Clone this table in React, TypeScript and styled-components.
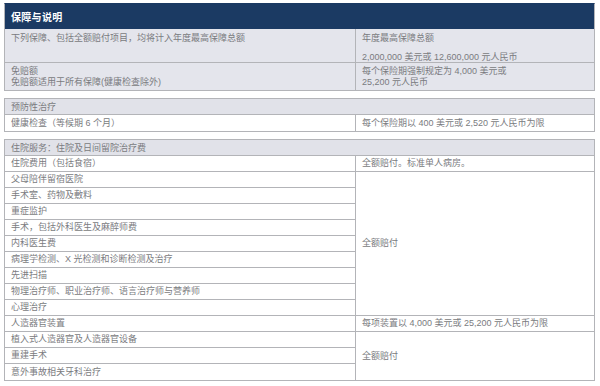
import React from "react";
import styled, { createGlobalStyle } from "styled-components";

const Global = createGlobalStyle`
  html, body { margin: 0; padding: 0; background: #ffffff; }
  body { font-family: "Liberation Sans", "Noto Sans CJK SC", sans-serif; }
`;

const Page = styled.div`
  width: 600px;
  height: 386px;
  box-sizing: border-box;
  padding: 3px 5px 0 4px;
  display: flex;
  flex-direction: column;
  gap: 7px;
  color: #7a7b80;
  font-size: 9px;
  overflow: hidden;
`;

const Section = styled.div<{ $dark?: boolean }>`
  display: grid;
  grid-template-columns: 351px 1fr;
  border: 1px solid #b3b4b8;
  border-top-color: ${(p) => (p.$dark ? "#1b3a63" : "#b3b4b8")};
`;

const Title = styled.div`
  grid-column: 1 / -1;
  height: 25px;
  background: #1b3a63;
  color: #ffffff;
  font-weight: bold;
  font-size: 10px;
  display: flex;
  align-items: center;
  padding-left: 6px;
  letter-spacing: 0.3px;
`;

const Head = styled.div`
  grid-column: 1 / -1;
  height: 16px;
  box-sizing: border-box;
  background: #e1e2e9;
  border-bottom: 1px solid #b3b4b8;
  display: flex;
  align-items: center;
  padding-left: 6px;
`;

const Cell = styled.div<{ $h?: number; $bg?: string; $left?: boolean; $center?: boolean; $last?: boolean }>`
  box-sizing: border-box;
  ${(p) => (p.$h ? `height: ${p.$h}px;` : "")}
  background: ${(p) => p.$bg || "#ffffff"};
  border-bottom: ${(p) => (p.$last ? "none" : "1px solid #b3b4b8")};
  ${(p) => (p.$left ? "border-right: 1px solid #b3b4b8;" : "")}
  padding: 0 6px;
  display: flex;
  flex-direction: column;
  justify-content: ${(p) => (p.$center ? "center" : "flex-start")};
  line-height: 11px;
  white-space: nowrap;
`;

const Line = styled.div<{ $mt?: number }>`
  margin-top: ${(p) => p.$mt ?? 0}px;
`;

const Rows = styled.div`
  grid-column: 1 / -1;
  display: grid;
  grid-template-columns: 351px 1fr;
  grid-auto-rows: 16px;
`;

const G = "#e4e5ec";

const leftRows = [
  "住院费用（包括食宿）",
  "父母陪伴留宿医院",
  "手术室、药物及敷料",
  "重症监护",
  "手术，包括外科医生及麻醉师费",
  "内科医生费",
  "病理学检测、X 光检测和诊断检测及治疗",
  "先进扫描",
  "物理治疗师、职业治疗师、语言治疗师与营养师",
  "心理治疗",
  "人造器官装置",
  "植入式人造器官及人造器官设备",
  "重建手术",
  "意外事故相关牙科治疗",
];

export default function App() {
  return (
    <>
      <Global />
      <Page>
        <Section $dark>
          <Title>保障与说明</Title>
          <Cell $h={34} $bg={G} $left>
            <Line $mt={4}>下列保障、包括全额赔付项目，均将计入年度最高保障总额</Line>
          </Cell>
          <Cell $h={34} $bg={G}>
            <Line $mt={4}>年度最高保障总额</Line>
            <Line $mt={8}>2,000,000 美元或 12,600,000 元人民币</Line>
          </Cell>
          <Cell $h={27} $bg={G} $left $last>
            <Line $mt={3}>免赔额</Line>
            <Line>免赔额适用于所有保障(健康检查除外)</Line>
          </Cell>
          <Cell $h={27} $bg={G} $last>
            <Line $mt={3}>每个保险期强制规定为 4,000 美元或</Line>
            <Line>25,200 元人民币</Line>
          </Cell>
        </Section>

        <Section>
          <Head>预防性治疗</Head>
          <Cell $h={16} $left $center $last>健康检查（等候期 6 个月）</Cell>
          <Cell $h={16} $center $last>每个保险期以 400 美元或 2,520 元人民币为限</Cell>
        </Section>

        <Section>
          <Head>住院服务：住院及日间留院治疗费</Head>
          <Rows>
            {leftRows.map((t, i) => (
              <Cell
                key={t}
                $left
                $center
                $last={i === leftRows.length - 1}
                style={{ gridColumn: 1, gridRow: i + 1 }}
              >
                {t}
              </Cell>
            ))}
            <Cell $center style={{ gridColumn: 2, gridRow: "1 / span 1" }}>全额赔付。标准单人病房。</Cell>
            <Cell $center style={{ gridColumn: 2, gridRow: "2 / span 9" }}>全额赔付</Cell>
            <Cell $center style={{ gridColumn: 2, gridRow: "11 / span 1" }}>每项装置以 4,000 美元或 25,200 元人民币为限</Cell>
            <Cell $center $last style={{ gridColumn: 2, gridRow: "12 / span 3" }}>全额赔付</Cell>
          </Rows>
        </Section>
      </Page>
    </>
  );
}
